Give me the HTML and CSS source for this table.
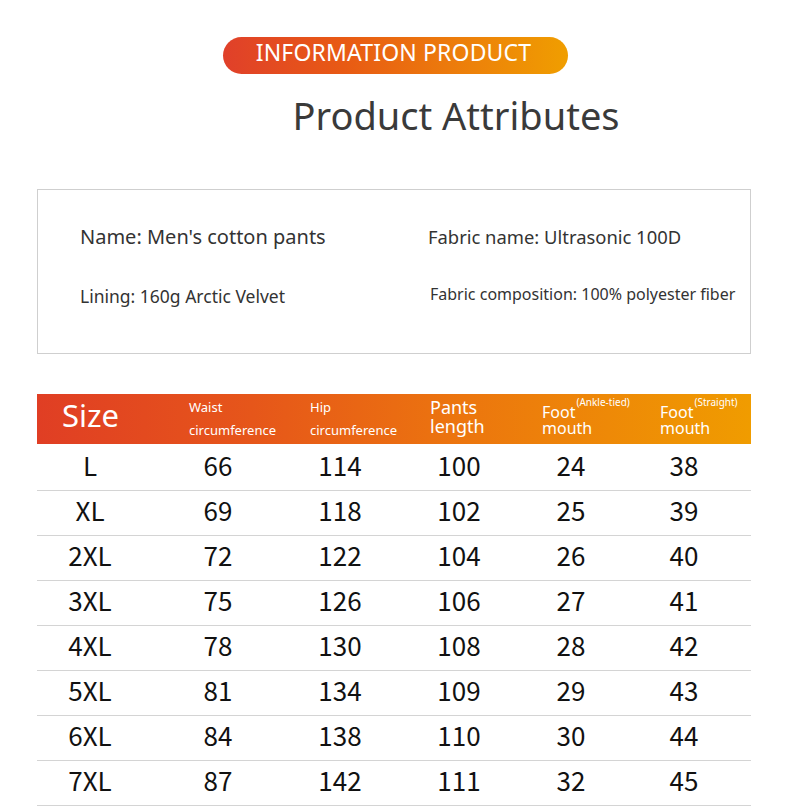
FILE: index.html
```html
<!DOCTYPE html>
<html lang="en">
<head>
<meta charset="utf-8">
<title>Product Attributes</title>
<link rel="stylesheet" href="styles.css">
</head>
<body>
<div class="page">
  <div class="pill">INFORMATION PRODUCT</div>
  <h1 class="title">Product Attributes</h1>

  <div class="info">
    <div class="info-item name">Name: Men's cotton pants</div>
    <div class="info-item fabric">Fabric name: Ultrasonic 100D</div>
    <div class="info-item lining">Lining: 160g Arctic Velvet</div>
    <div class="info-item comp">Fabric composition: 100% polyester fiber</div>
  </div>

  <div class="table">
    <div class="thead">
      <div class="th th-size">Size</div>
      <div class="th th-small c2">Waist<br>circumference</div>
      <div class="th th-small c3">Hip<br>circumference</div>
      <div class="th th-mid c4">Pants<br>length</div>
      <div class="th th-foot c5">Foot<sup>(Ankle-tied)</sup><br>mouth</div>
      <div class="th th-foot c6">Foot<sup>(Straight)</sup><br>mouth</div>
    </div>
    <div class="tbody">
      <div class="tr"><span>L</span><span>66</span><span>114</span><span>100</span><span>24</span><span>38</span></div>
      <div class="tr"><span>XL</span><span>69</span><span>118</span><span>102</span><span>25</span><span>39</span></div>
      <div class="tr"><span>2XL</span><span>72</span><span>122</span><span>104</span><span>26</span><span>40</span></div>
      <div class="tr"><span>3XL</span><span>75</span><span>126</span><span>106</span><span>27</span><span>41</span></div>
      <div class="tr"><span>4XL</span><span>78</span><span>130</span><span>108</span><span>28</span><span>42</span></div>
      <div class="tr"><span>5XL</span><span>81</span><span>134</span><span>109</span><span>29</span><span>43</span></div>
      <div class="tr"><span>6XL</span><span>84</span><span>138</span><span>110</span><span>30</span><span>44</span></div>
      <div class="tr"><span>7XL</span><span>87</span><span>142</span><span>111</span><span>32</span><span>45</span></div>
    </div>
  </div>
</div>
</body>
</html>
```
FILE: styles.css
```css
* { box-sizing: border-box; }
html, body { margin: 0; padding: 0; background: #fff; }
body {
  font-family: "Noto Sans", "Open Sans", sans-serif;
  color: #333;
  width: 790px;
  height: 810px;
  overflow: hidden;
}
.page { padding-top: 37px; }

.pill {
  width: 345px;
  height: 37px;
  margin: 0 auto;
  border-radius: 19px;
  background: linear-gradient(90deg, #e0402a 0%, #e85a14 35%, #ec7a0c 65%, #f09e00 100%);
  color: #fff;
  font-size: 23px;
  line-height: 31px;
  text-align: center;
  padding-right: 3px;
  letter-spacing: 0.15px;
}

.title {
  margin: 15px 0 0;
  padding-left: 122px;
  text-align: center;
  font-weight: 400;
  font-size: 38px;
  line-height: 52px;
  color: #3a3a3a;
}

.info {
  margin: 48px 0 0 37px;
  width: 714px;
  height: 165px;
  border: 1px solid #cfcfcf;
  display: grid;
  grid-template-columns: 348px 1fr;
  grid-template-rows: 24px 24px;
  row-gap: 35px;
  padding: 35px 0 0 42px;
}
.info-item { color: #333; white-space: nowrap; line-height: 24px; }
.name { font-size: 20px; }
.fabric { font-size: 18.4px; }
.lining { font-size: 17.5px; }
.comp { font-size: 16px; padding-left: 2px; margin-top: -2px; }

.table {
  margin: 40px 0 0 37px;
  width: 714px;
}
.thead {
  height: 50px;
  display: flex;
  align-items: flex-start;
  padding-left: 25px;
  background: linear-gradient(90deg, #e03e24 0%, #e6561a 30%, #ec760e 60%, #f09c00 100%);
  color: #fff;
}
.th { white-space: nowrap; }
.th-size { width: 127px; font-size: 31px; line-height: 34px; padding-top: 4px; }
.c2 { width: 121px; }
.c3 { width: 120px; }
.c4 { width: 112px; }
.c5 { width: 118px; }
.th-small { font-size: 13px; line-height: 23px; padding-top: 2px; }
.th-mid { font-size: 18px; line-height: 19px; padding-top: 4px; }
.th-foot { font-size: 16px; line-height: 16px; padding-top: 8px; }
.th-foot sup {
  font-size: 10px;
  line-height: 0;
  vertical-align: 12px;
  margin-left: 1px;
}

.tbody { padding-top: 2px; }
.tr {
  display: grid;
  grid-template-columns: 106px 150px 94px 144px 80px 140px;
  height: 45px;
  border-bottom: 1px solid #d4d4d4;
  align-items: center;
  font-family: "Noto Sans CJK SC", "DejaVu Sans Condensed", sans-serif;
  font-size: 26px;
  line-height: 30px;
  color: #111;
  padding-bottom: 7px;
}
.tr span { text-align: center; }
.tr span:last-child { padding-left: 6px; }
```
